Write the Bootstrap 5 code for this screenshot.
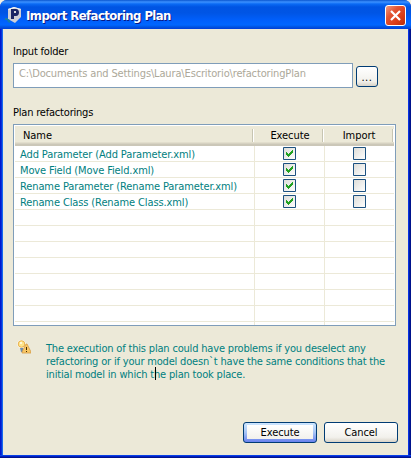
<!DOCTYPE html>
<html lang="en">
<head>
<meta charset="utf-8">
<title>Import Refactoring Plan</title>
<link rel="stylesheet" href="https://cdn.jsdelivr.net/npm/bootstrap@5.3.0/dist/css/bootstrap.min.css">
<style>
body{width:411px;height:458px;overflow:hidden;background:#f4f1e4;font:11px/13px "DejaVu Sans Condensed","DejaVu Sans",sans-serif;font-stretch:condensed;color:#000;letter-spacing:-.2px}
.xp-window{width:411px;height:458px;border-radius:7px 7px 0 0;background:linear-gradient(90deg,#0019cf 0 1px,#0831d9 1px 2px,#166aee 2px 3px,#0855dd 3px 408px,#0831e5 408px 409px,#001ea0 409px 410px,#00138c 410px);overflow:hidden}
.xp-title{height:29px;padding:0 5px;color:#fff;background:linear-gradient(#0a56cf 0,#3c91ff 2px,#0a6af4 4px,#0054e3 7px,#0055e5 13px,#005ffb 20px,#0066ff 25px,#0053e0 27px,#003dd7 29px)}
.xp-title h1{font:bold 13px/16px "DejaVu Sans Condensed","DejaVu Sans",sans-serif;font-stretch:condensed;text-shadow:1px 1px #0a1883;letter-spacing:-.58px;padding-top:3px;margin-left:4px}
.xp-close{width:21px;height:21px;border:1px solid #fff;border-radius:3px;background:linear-gradient(135deg,#f09a80,#e25433 35%,#da3c16 70%,#b52c08);margin-top:2px}
.xp-client{margin:0 3px;height:426px;background:#ece9d8;padding:16px 10px 0}
.xp-bottom{height:3px;background:linear-gradient(#0841e8 0 1px,#001ec0 1px 2px,#00138c 2px)}
.xp-label{height:13px;white-space:nowrap}
.xp-label-plan{margin-top:18px}
.xp-field{width:340px;height:25px;border:1px solid #7f9db9;border-radius:0;margin-top:5px;padding:3px 5px;background:#fff;color:#aca899;white-space:nowrap;font-size:11px;line-height:13px;letter-spacing:-.145px}
.xp-btn{--bs-btn-padding-x:0;--bs-btn-padding-y:0;--bs-btn-font-size:11px;--bs-btn-line-height:13px;--bs-btn-color:#000;--bs-btn-border-color:#003c74;--bs-btn-border-radius:3px;width:74px;height:21px;background:linear-gradient(#fff,#f2f1ec 75%,#d8d3c7);letter-spacing:-.1px}
.xp-browse{width:22px;margin:0 0 1px 3px;padding-top:2px;letter-spacing:.6px}
.xp-default{background:linear-gradient(#fff,#f2f1ec) 3px 2px/66px 14px no-repeat,linear-gradient(#cee7ff,#a5c4f5 50%,#6982ee)}
.xp-list{width:383px;height:202px;margin-top:5px;border:1px solid #7f9db9;background:#fff;padding:1px}
.xp-cols{display:grid;grid-template-columns:240px 70px 69px}
.xp-head{grid-template-columns:239px 70px 70px;height:20px;letter-spacing:-.05px;background:linear-gradient(#ece9d8 0 16px,#e2decd 16px 17px,#d6d2c2 17px 18px,#cbc7b8 18px)}
.xp-head>div{position:relative;padding-top:3px;text-align:center}
.xp-head>div::after{content:"";position:absolute;right:0;top:3px;width:2px;height:13px;border-left:1px solid #c7c5b2;background:#fff}
.xp-head>div:first-child{text-align:left;padding-left:8px}
.xp-head>div:nth-child(2){padding-left:2px}
.xp-line{height:16px;border-bottom:1px solid #ece9d8;color:#008080;white-space:nowrap;letter-spacing:-.115px}
.xp-line>div{border-right:1px solid #ece9d8;padding:2px 0 0 5px;height:15px}
.xp-line>div:last-child{border:0}
.xp-line>div+div{padding:1px 0 0 28px}
.xp-stub{height:3px;border-bottom:0}
.xp-stub>div{height:3px;padding:0}
.xp-check{display:block;width:13px;height:13px}
.xp-note{margin-top:10px;color:#008080;height:40px;letter-spacing:-.18px}
.xp-note p{margin:6px 0 0 15px;white-space:nowrap;position:relative}
.xp-caret{position:absolute;left:109px;top:25px;width:1px;height:13px;background:#000}
.xp-actions{gap:7px;margin-top:46px}
</style>
</head>
<body>
<div class="xp-window">
  <header class="xp-title d-flex align-items-center">
    <svg width="17" height="18" viewBox="0 0 17 18"><path d="M3 3 9 1l7 2v8l-6 6-7-4z" fill="#cfcfd6"/><path d="m3 3 6-2 7 2-1 1-5-2-6 2z" fill="#f4f4f2"/><path d="M6 3h5c4 0 4 7 0 7H9v3H6z" fill="#1b2564"/><path d="M9 5h2v2H9z" fill="#d7d7db"/><path d="M0 12h2l1 1 2 1v3l-2-1-1-2H0z" fill="#167da8"/></svg>
    <h1 class="mb-0 flex-grow-1 text-nowrap">Import Refactoring Plan</h1>
    <div class="xp-close"><svg class="d-block" width="19" height="19"><path d="m5 5 9 9m0-9-9 9" stroke="#fff" stroke-width="2.2"/></svg></div>
  </header>
  <main class="xp-client">
    <div class="xp-label">Input folder</div>
    <div class="d-flex align-items-end">
      <div class="xp-field form-control flex-shrink-0">C:\Documents and Settings\Laura\Escritorio\refactoringPlan</div>
      <button class="btn xp-btn xp-browse">...</button>
    </div>
    <div class="xp-label xp-label-plan">Plan refactorings</div>
    <section class="xp-list">
      <div class="xp-cols xp-head"><div>Name</div><div>Execute</div><div>Import</div></div>
      <div id="rows"></div>
    </section>
    <div class="xp-note d-flex">
      <svg class="ms-1 mt-1" width="14" height="14" viewBox="0 0 14 14"><circle cx="4.500" cy="4" r="4.200" fill="#fff"/><circle cx="4.500" cy="4" r="3.300" fill="#ffe58c" stroke="#e8b04c"/><path d="M3 2h2v2H3z" fill="#fff9dc"/><path d="M3 8h3v4H4z" fill="#6c8cb0"/><path d="M9 4h1l4 8v1H5v-1z" fill="#f9c765" stroke="#d39a48" stroke-width=".8"/><path d="M9 7h1v3H9zm0 4h1v1H9z" fill="#402800"/></svg>
      <p>The execution of this plan could have problems if you deselect any<br>refactoring or if your model doesn`t have the same conditions that the<br>initial model in which the plan took place.<span class="xp-caret"></span></p>
    </div>
    <div class="xp-actions d-flex justify-content-end"><button class="btn xp-btn xp-default">Execute</button><button class="btn xp-btn">Cancel</button></div>
  </main>
  <div class="xp-bottom"></div>
</div>
<svg class="position-absolute" width="0" height="0"><defs><linearGradient id="boxFill" x2="1" y2="1"><stop stop-color="#dcdcd7"/><stop offset="1" stop-color="#fff"/></linearGradient></defs></svg>
<script>
const names=["Add Parameter (Add Parameter.xml)","Move Field (Move Field.xml)","Rename Parameter (Rename Parameter.xml)","Rename Class (Rename Class.xml)"];
const tick='<path shape-rendering="crispEdges" d="M3 5h1v1h1v1h1v-1h1v-1h1v-1h1v-1h1v3h-1v1h-1v1h-1v1h-1v1h-1v-1h-1v-1h-1z" fill="#21a121"/>';
const box=on=>`<svg class="xp-check" viewBox="0 0 13 13"><path d="M.5.5h12v12H.5z" fill="url(#boxFill)" stroke="#1c5180"/>${on?tick:''}</svg>`;
const rows=document.getElementById("rows");
for(let i=0;i<11;i++){
  const n=names[i];
  rows.insertAdjacentHTML("beforeend",`<div class="xp-cols xp-line"><div>${n||""}</div><div>${n?box(true):""}</div><div>${n?box(false):""}</div></div>`);
}
rows.insertAdjacentHTML("beforeend",'<div class="xp-cols xp-line xp-stub"><div></div><div></div><div></div></div>');
</script>
<script src="https://cdn.jsdelivr.net/npm/bootstrap@5.3.0/dist/js/bootstrap.bundle.min.js"></script>
</body>
</html>
